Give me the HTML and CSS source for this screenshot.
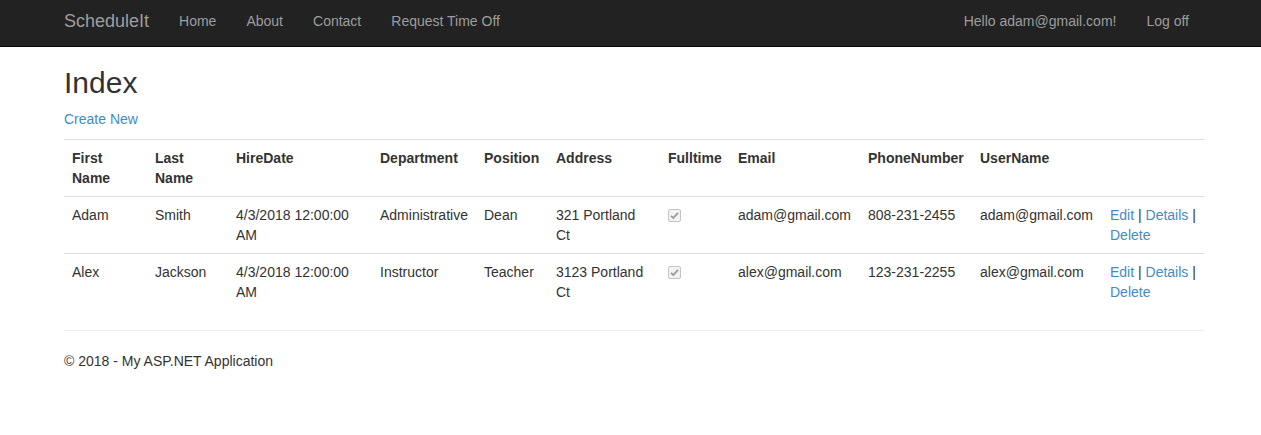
FILE: index.html
```html
<!DOCTYPE html>
<html>
<head>
<meta charset="utf-8">
<title>Index - ScheduleIt</title>
<link rel="stylesheet" href="styles.css">
</head>
<body>
<nav class="navbar">
  <div class="container nav-inner">
    <div class="nav-left">
      <a class="brand" href="#">ScheduleIt</a>
      <a class="nav-link" href="#">Home</a>
      <a class="nav-link" href="#">About</a>
      <a class="nav-link" href="#">Contact</a>
      <a class="nav-link" href="#">Request Time Off</a>
    </div>
    <div class="nav-right">
      <a class="nav-link" href="#">Hello adam@gmail.com!</a>
      <a class="nav-link" href="#">Log off</a>
    </div>
  </div>
</nav>
<main class="container body-content">
  <h2 class="title">Index</h2>
  <p class="create"><a href="#">Create New</a></p>
  <table class="table">
    <colgroup>
      <col class="c-first">
      <col class="c-last">
      <col class="c-hire">
      <col class="c-dept">
      <col class="c-pos">
      <col class="c-addr">
      <col class="c-full">
      <col class="c-email">
      <col class="c-phone">
      <col class="c-user">
      <col class="c-act">
    </colgroup>
    <tr>
      <th>First Name</th>
      <th>Last Name</th>
      <th>HireDate</th>
      <th>Department</th>
      <th>Position</th>
      <th>Address</th>
      <th>Fulltime</th>
      <th>Email</th>
      <th>PhoneNumber</th>
      <th>UserName</th>
      <th></th>
    </tr>
    <tr>
      <td>Adam</td>
      <td>Smith</td>
      <td>4/3/2018 12:00:00 AM</td>
      <td>Administrative</td>
      <td>Dean</td>
      <td>321 Portland Ct</td>
      <td><span class="check"><svg width="13" height="13" viewBox="0 0 13 13"><rect x="0.5" y="0.5" width="12" height="12" rx="1.5" fill="#f3f3f3" stroke="#c4c4c4"/><path d="M3 6.8 L5.3 9 L10 3.8" fill="none" stroke="#9a9a9a" stroke-width="1.8"/></svg></span></td>
      <td>adam@gmail.com</td>
      <td>808-231-2455</td>
      <td>adam@gmail.com</td>
      <td><a href="#">Edit</a> | <a href="#">Details</a> | <a href="#">Delete</a></td>
    </tr>
    <tr>
      <td>Alex</td>
      <td>Jackson</td>
      <td>4/3/2018 12:00:00 AM</td>
      <td>Instructor</td>
      <td>Teacher</td>
      <td>3123 Portland Ct</td>
      <td><span class="check"><svg width="13" height="13" viewBox="0 0 13 13"><rect x="0.5" y="0.5" width="12" height="12" rx="1.5" fill="#f3f3f3" stroke="#c4c4c4"/><path d="M3 6.8 L5.3 9 L10 3.8" fill="none" stroke="#9a9a9a" stroke-width="1.8"/></svg></span></td>
      <td>alex@gmail.com</td>
      <td>123-231-2255</td>
      <td>alex@gmail.com</td>
      <td><a href="#">Edit</a> | <a href="#">Details</a> | <a href="#">Delete</a></td>
    </tr>
  </table>
  <hr class="rule">
  <footer class="footer">
    <p>&copy; 2018 - My ASP.NET Application</p>
  </footer>
</main>
</body>
</html>
```
FILE: styles.css
```css
* { box-sizing: border-box; }
html, body { margin: 0; padding: 0; }
body {
  font-family: "Liberation Sans", Arial, Helvetica, sans-serif;
  font-size: 14px;
  line-height: 20px;
  color: #333;
  background: #fff;
}
a { color: #428bca; text-decoration: none; }

.container {
  width: 1140px;
  margin-left: 64px;
}

.navbar {
  background: #222;
  border-bottom: 1px solid #080808;
  height: 47px;
}
.nav-inner {
  display: flex;
  justify-content: space-between;
  height: 46px;
}
.nav-left, .nav-right { display: flex; }
.brand {
  color: #9d9d9d;
  font-size: 18px;
  line-height: 20px;
  padding: 11px 15px 15px 0;
}
.nav-link {
  color: #9d9d9d;
  padding: 11px 15px 15px;
}

.title {
  font-size: 30px;
  font-weight: 500;
  line-height: 33px;
  margin: 19px 0 10px;
}
.create { margin: 0 0 10px; }

.table {
  width: 100%;
  table-layout: fixed;
  border-collapse: collapse;
  border-spacing: 0;
  margin-bottom: 20px;
}
.c-first { width: 83px; }
.c-last { width: 81px; }
.c-hire { width: 144px; }
.c-dept { width: 104px; }
.c-pos { width: 72px; }
.c-addr { width: 112px; }
.c-full { width: 70px; }
.c-email { width: 130px; }
.c-phone { width: 112px; }
.c-user { width: 130px; }
.c-act { width: 102px; }

.table th, .table td {
  padding: 8px;
  text-align: left;
  vertical-align: top;
  border-top: 1px solid #ddd;
  line-height: 20px;
}
.table th { font-weight: bold; }
.check {
  display: inline-block;
  width: 13px;
  height: 13px;
  margin-top: 4px;
  vertical-align: top;
}
.check svg { display: block; }

.rule {
  margin: 20px 0;
  border: 0;
  border-top: 1px solid #eee;
  height: 0;
}
.footer p { margin: 0 0 10px; }
```
